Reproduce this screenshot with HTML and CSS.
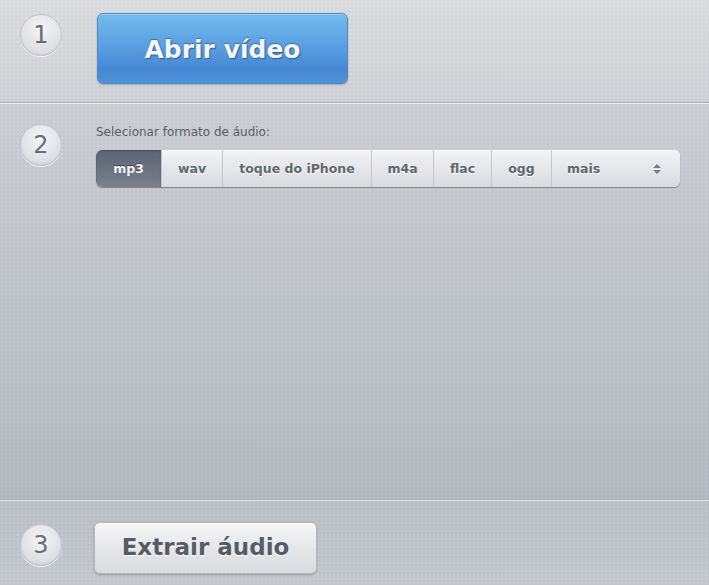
FILE: index.html
```html
<!DOCTYPE html>
<html lang="pt-br">
<head>
  <meta charset="UTF-8" />
  <title>Extrair áudio</title>
  <link rel="stylesheet" href="styles.css">
</head>
<body>

  <section class="passo passo-abrir">
    <div class="numero">1</div>
    <button class="btn-abrir">Abrir vídeo</button>
  </section>

  <section class="passo passo-formato">
    <div class="numero">2</div>
    <div class="formato">
      <div class="rotulo">Selecionar formato de áudio:</div>
      <div class="formatos">
        <div class="fmt f-mp3 ativo">mp3</div>
        <div class="fmt f-wav">wav</div>
        <div class="fmt f-toque">toque do iPhone</div>
        <div class="fmt f-m4a">m4a</div>
        <div class="fmt f-flac">flac</div>
        <div class="fmt f-ogg">ogg</div>
        <div class="fmt mais">mais
          <svg class="setas" width="10" height="14" viewBox="0 0 10 14">
            <path d="M1 6 L5 2 L9 6 Z" fill="#7a7e85"/>
            <path d="M1 8 L5 12 L9 8 Z" fill="#7a7e85"/>
          </svg>
        </div>
      </div>
    </div>
  </section>

  <section class="passo passo-extrair">
    <div class="numero">3</div>
    <button class="btn-extrair">Extrair áudio</button>
  </section>

</body>
</html>
```

FILE: styles.css
```css
body {
  margin: 0;
  width: 709px;
  height: 585px;
  overflow: hidden;
  font-family: 'DejaVu Sans', Verdana, sans-serif;
  background: #c3c7cc;
}

.passo {
  display: flex;
  align-items: flex-start;
  padding-left: 20px;
  box-sizing: border-box;
  background-image:
    radial-gradient(rgba(255, 255, 255, 0.12) 1px, transparent 1.5px),
    linear-gradient(#d9dadd, #cdd0d4);
  background-size: 4px 4px, 100% 100%;
}

.numero {
  width: 40px;
  height: 40px;
  border-radius: 50%;
  border: 1px solid #c1c4c9;
  background: radial-gradient(circle at 50% 35%, #f4f5f7, #dcdee2 70%, #d0d3d8);
  box-shadow: 0 1px 0 #eef0f2, inset 0 -1px 2px rgba(0, 0, 0, 0.05);
  color: #6a6e74;
  font-size: 24px;
  line-height: 40px;
  text-align: center;
  flex-shrink: 0;
}

.passo-abrir {
  height: 103px;
  padding-top: 13px;
  border-bottom: 1px solid #a9adb3;
}

.passo-abrir .numero {
  margin-top: 1px;
}

.btn-abrir {
  margin-left: 35px;
  width: 251px;
  height: 71px;
  border: 1px solid #4a8acb;
  border-radius: 6px;
  background: linear-gradient(#74bbee, #5aa0e2 45%, #4787d4 80%, #4c92d9);
  box-shadow: inset 0 1px 0 #a0d2f6, 0 1px 2px rgba(0, 0, 0, 0.2);
  color: #f4f5f7;
  font-family: 'DejaVu Sans', Verdana, sans-serif;
  font-weight: bold;
  font-size: 25px;
  text-shadow: 0 -1px 1px #3c6fa8, 1px 1px 1px #2f5f96;
  padding: 2px 0 0;
}

.passo-formato {
  height: 397px;
  padding-top: 20px;
  border-top: 1px solid #eceef0;
  border-bottom: 1px solid #a8adb4;
  background-image:
    radial-gradient(rgba(255, 255, 255, 0.1) 1px, transparent 1.5px),
    linear-gradient(#c9ccd1, #bfc3c9 40%, #b3b8c0);
}

.formato {
  margin-left: 34px;
}

.rotulo {
  font-size: 12px;
  color: #5b5f66;
  padding-top: 1px;
  height: 25px;
}

.formatos {
  display: flex;
  width: 584px;
  height: 37px;
  box-sizing: border-box;
  border-radius: 6px;
  background: linear-gradient(#f2f3f5, #e2e4e8 60%, #d8dbdf);
  box-shadow: 0 1px 1px rgba(0, 0, 0, 0.35), inset 0 1px 0 #fff;
  overflow: hidden;
}

.fmt {
  box-sizing: border-box;
  text-align: center;
  line-height: 37px;
  font-size: 12.5px;
  font-weight: bold;
  color: #62666d;
  text-shadow: 0 1px 0 #fff;
  border-left: 1px solid #c4c7cc;
}

.f-mp3 { width: 65px; border-left: none; }
.f-wav { width: 61px; }
.f-toque { width: 149px; }
.f-m4a { width: 62px; }
.f-flac { width: 58px; }
.f-ogg { width: 60px; }

.fmt.ativo {
  color: #f2f3f5;
  text-shadow: 0 -1px 0 #3f4550;
  background: linear-gradient(#5d6574, #6d7482 60%, #7a808c);
  box-shadow: inset 0 1px 2px rgba(0, 0, 0, 0.3);
}

.fmt.mais {
  flex: 1;
  display: flex;
  align-items: center;
  justify-content: space-between;
  padding: 0 18px 0 15px;
}

.passo-extrair {
  height: 85px;
  padding-top: 21px;
  border-top: 1px solid #e6e8eb;
  background-image:
    radial-gradient(rgba(255, 255, 255, 0.1) 1px, transparent 1.5px),
    linear-gradient(#b9bec5, #c3c7cc);
}

.passo-extrair .numero {
  margin-top: 2px;
}

.btn-extrair {
  margin-left: 32px;
  width: 223px;
  height: 52px;
  border: 1px solid #b3b6bb;
  border-radius: 6px;
  background: linear-gradient(#f5f6f7, #e6e7e9 50%, #d9dadd);
  box-shadow: inset 0 1px 0 #fff, 0 1px 2px rgba(0, 0, 0, 0.25);
  color: #565c66;
  font-family: 'DejaVu Sans', Verdana, sans-serif;
  font-weight: bold;
  font-size: 23px;
  text-shadow: 0 1px 0 #fff;
  padding: 0 0 2px;
}
```
